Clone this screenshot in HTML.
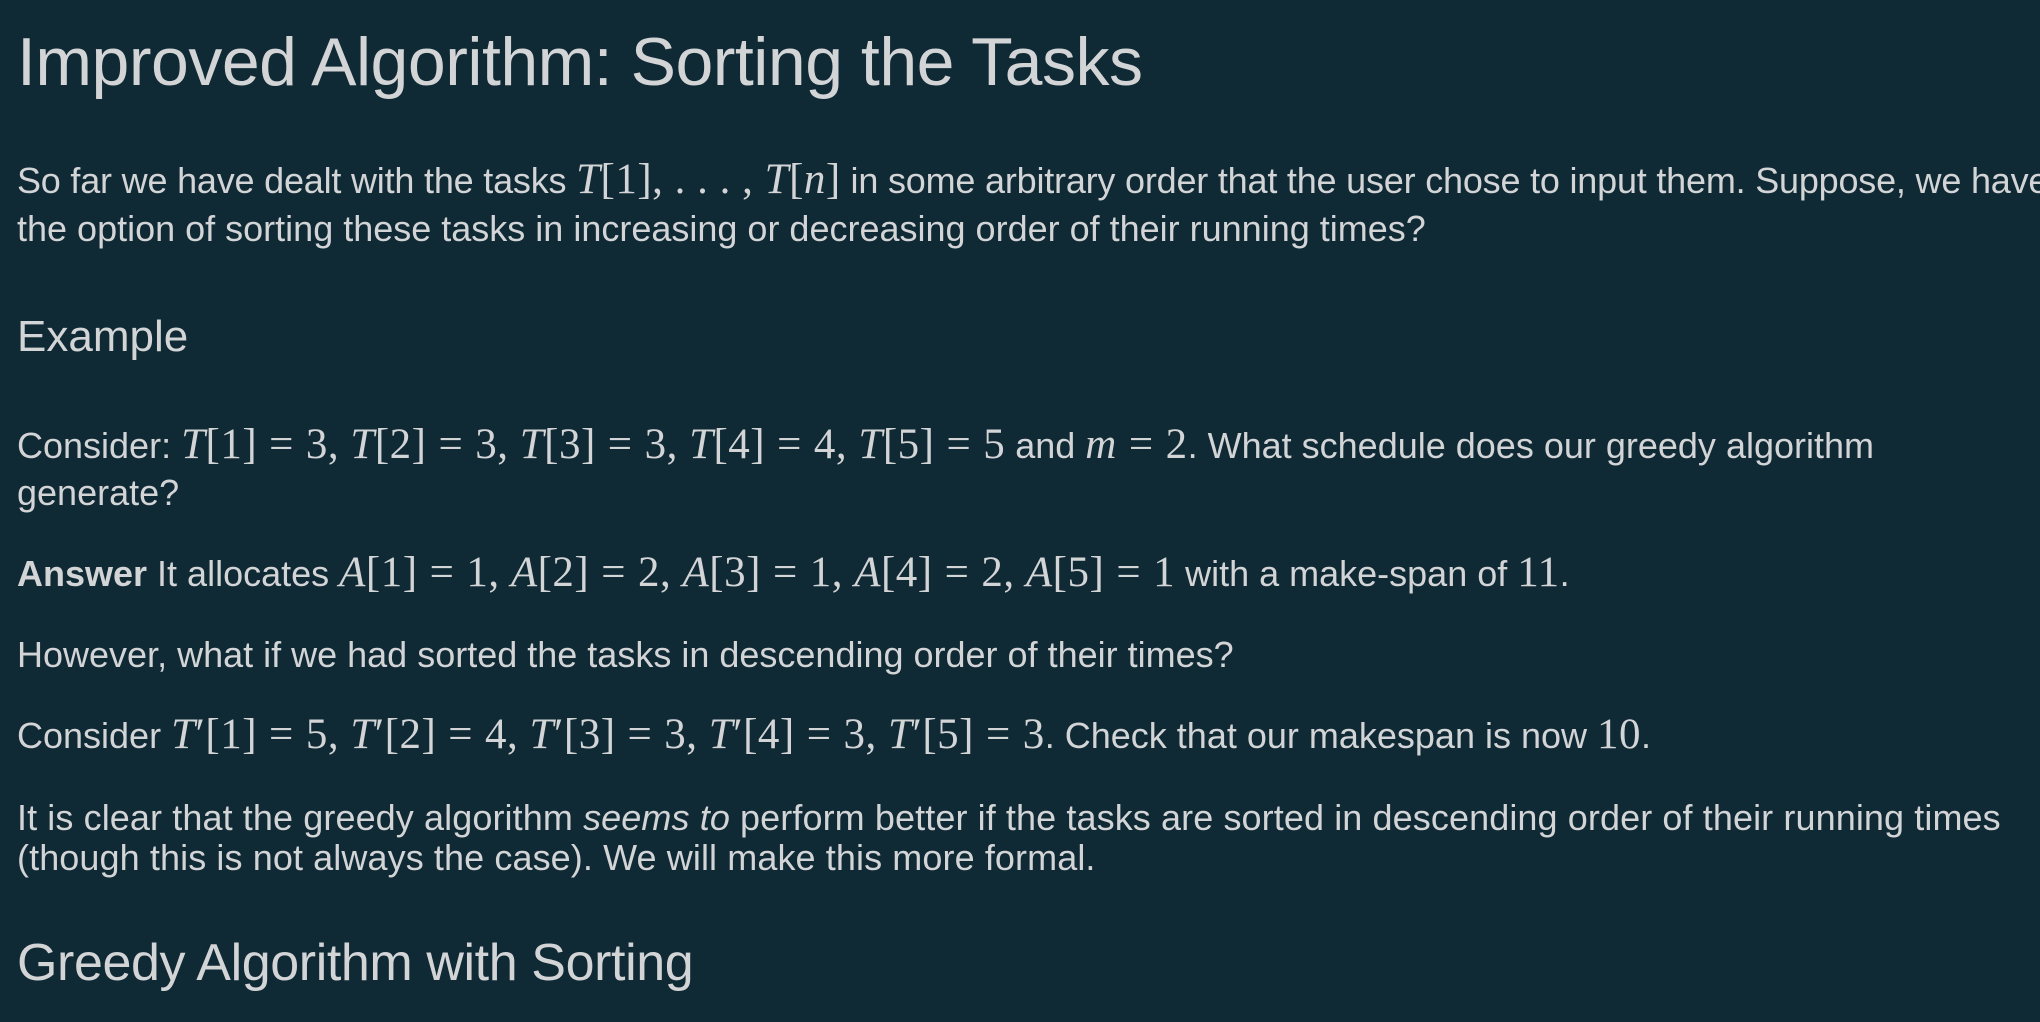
<!DOCTYPE html>
<html><head><meta charset="utf-8"><style>
html,body{margin:0;padding:0;background:#0f2935;width:2040px;height:1022px;overflow:hidden}
body{font-family:"Liberation Sans",sans-serif;color:#d2d4d6}
.l{position:absolute;left:17px;white-space:nowrap;line-height:1;font-size:36px;letter-spacing:0}
.m{font-family:"Liberation Serif",serif;font-size:43px;letter-spacing:0.5px}
.m i{font-style:italic}
.e{margin:0 12px}
</style></head><body>
<div class="l" style="top:28px;font-size:68px;letter-spacing:-0.5px">Improved Algorithm: Sorting the Tasks</div>
<div class="l" style="top:158px;letter-spacing:-0.2px">So far we have dealt with the tasks <span class="m"><i>T</i>[1], . . . , <i>T</i>[<i>n</i>]</span> in some arbitrary order that the user chose to input them. Suppose, we have</div>
<div class="l" style="top:211px">the option of sorting these tasks in increasing or decreasing order of their running times?</div>
<div class="l" style="top:315px;font-size:44px">Example</div>
<div class="l" style="top:423px">Consider: <span class="m"><i>T</i>[1]<span class="e">=</span>3, <i>T</i>[2]<span class="e">=</span>3, <i>T</i>[3]<span class="e">=</span>3, <i>T</i>[4]<span class="e">=</span>4, <i>T</i>[5]<span class="e">=</span>5</span> and <span class="m"><i>m</i><span class="e">=</span>2</span>. What schedule does our greedy algorithm</div>
<div class="l" style="top:475px">generate?</div>
<div class="l" style="top:551px"><b>Answer</b> It allocates <span class="m"><i>A</i>[1]<span class="e">=</span>1, <i>A</i>[2]<span class="e">=</span>2, <i>A</i>[3]<span class="e">=</span>1, <i>A</i>[4]<span class="e">=</span>2, <i>A</i>[5]<span class="e">=</span>1</span> with a make-span of <span class="m">11</span>.</div>
<div class="l" style="top:637px">However, what if we had sorted the tasks in descending order of their times?</div>
<div class="l" style="top:713px">Consider <span class="m"><i>T</i>′[1]<span class="e">=</span>5, <i>T</i>′[2]<span class="e">=</span>4, <i>T</i>′[3]<span class="e">=</span>3, <i>T</i>′[4]<span class="e">=</span>3, <i>T</i>′[5]<span class="e">=</span>3</span>. Check that our makespan is now <span class="m">10</span>.</div>
<div class="l" style="top:800px;letter-spacing:0.1px">It is clear that the greedy algorithm <i>seems to</i> perform better if the tasks are sorted in descending order of their running times</div>
<div class="l" style="top:840px;letter-spacing:0.1px">(though this is not always the case). We will make this more formal.</div>
<div class="l" style="top:937px;font-size:52px;letter-spacing:-0.4px">Greedy Algorithm with Sorting</div>
</body></html>
